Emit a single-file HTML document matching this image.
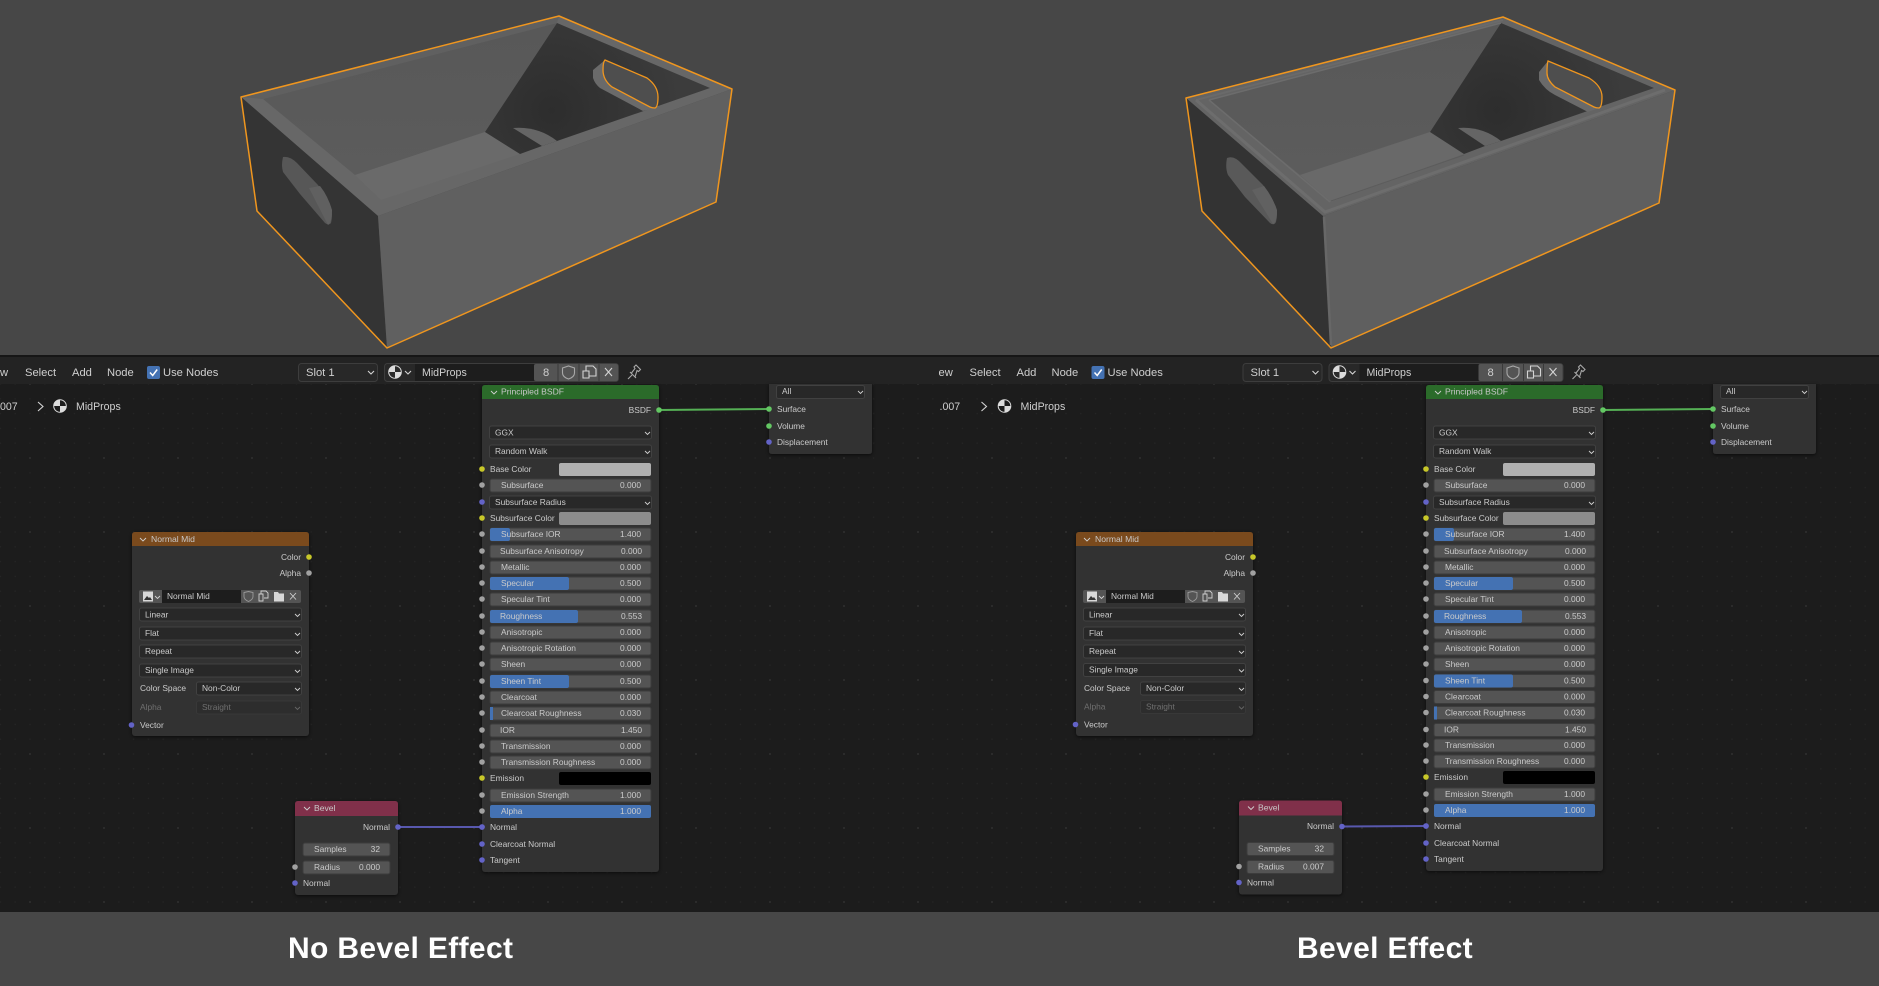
<!DOCTYPE html>
<html><head><meta charset="utf-8"><title>Bevel Effect Comparison</title>
<style>
html,body{margin:0;padding:0;background:#474747;width:1879px;height:986px;overflow:hidden}
svg{display:block;position:absolute;left:0;top:0}
text{font-family:"Liberation Sans",sans-serif}
.t{font-size:8.4px;fill:#cbcbcb}
.d{font-size:8.4px;fill:#6f6f6f}
.r{text-anchor:end}
.h{font-size:11.2px;fill:#cfcfcf}
.mp{font-size:10.6px;fill:#cfcfcf}
.n{font-size:8.6px;fill:#c8c8c8}
.f{fill:#545454;stroke:#3c3c3c;stroke-width:1}
.b{fill:#4472b3}
.m{fill:#282828;stroke:#414141;stroke-width:1}
.c{fill:none;stroke:#d0d0d0;stroke-width:.9}
.y{fill:#c7c729}.g{fill:#a1a1a1}.u{fill:#6363c7}.e{fill:#63c763}
.node{fill:#303030;filter:url(#sh)}
.title{font-size:30px;font-weight:700;fill:#fff;letter-spacing:.35px}
.ic{fill:none;stroke:#d4d4d4;stroke-width:1.1}
.soft{filter:blur(.3px)}
</style></head><body>
<svg width="1879" height="986" viewBox="0 0 1879 986" xmlns="http://www.w3.org/2000/svg">
<defs>
<filter id="sh" x="-10%" y="-10%" width="120%" height="120%"><feDropShadow dx="0" dy="1" stdDeviation="1.5" flood-color="#000" flood-opacity=".6"/></filter>
<pattern id="p1" width="14.8" height="14.8" patternUnits="userSpaceOnUse" x="0.4" y="14"><rect x="-.6" y="-.6" width="1.2" height="1.2" fill="#262626"/><rect x="14.2" y="-.6" width="1.2" height="1.2" fill="#262626"/><rect x="-.6" y="14.2" width="1.2" height="1.2" fill="#262626"/><rect x="14.2" y="14.2" width="1.2" height="1.2" fill="#262626"/></pattern>
<pattern id="p2" width="74" height="74" patternUnits="userSpaceOnUse" x="30" y="14"><rect x="-1" y="-1" width="2" height="2" fill="#2b2b2b"/><rect x="73" y="-1" width="2" height="2" fill="#2b2b2b"/><rect x="-1" y="73" width="2" height="2" fill="#2b2b2b"/><rect x="73" y="73" width="2" height="2" fill="#2b2b2b"/></pattern>
<radialGradient id="bw" gradientUnits="userSpaceOnUse" cx="552" cy="110" r="130"><stop offset="0" stop-color="#2d2d2d"/><stop offset="1" stop-color="#3c3c3c"/></radialGradient>
<radialGradient id="bw2" gradientUnits="userSpaceOnUse" cx="1497" cy="110" r="130"><stop offset="0" stop-color="#2d2d2d"/><stop offset="1" stop-color="#3c3c3c"/></radialGradient>
<linearGradient id="iw" x1="0" y1="0" x2="0" y2="1"><stop offset="0" stop-color="#585858"/><stop offset="1" stop-color="#5c5c5c"/></linearGradient>
</defs>

<!-- backgrounds -->
<rect width="1879" height="986" fill="#474747"/>
<rect x="0" y="355" width="1879" height="557" fill="#1c1c1c"/>
<rect x="0" y="355" width="1879" height="2" fill="#161616"/>
<rect x="0" y="384" width="1879" height="528" fill="url(#p1)"/>
<rect x="0" y="384" width="1879" height="528" fill="url(#p2)"/>
<rect x="0" y="357" width="1879" height="27" fill="#232323"/>

<!-- LEFT BOX -->
<g class="soft">
<polygon points="241,97 559,16 732,89 378,216" fill="#676767"/>
<polygon points="241,97 378,216 387,348 257,211" fill="#343434"/>
<polygon points="378,216 732,89 716,202 387,348" fill="#606060"/>
<polygon points="241,97 559,16 557,23 263,99" fill="#606060"/>
<polygon points="263,99 557,23 485,132 355,175" fill="url(#iw)"/>
<polygon points="355,175 485,132 520,154 381,200" fill="#6a6a6a"/>
<polygon points="557,23 710,88 557,141 542,146 520,154 485,132" fill="url(#bw)"/>
<path d="M513,128 Q538,126 557,141 L542,146 Z" fill="#656565"/>
<path d="M605,60 L593,70 L593,78 Q595,84 600,88 L643,111 L655,108 L612,87 Z" fill="#6a6a6a"/>
<path d="M605,60 L647,78 Q658,86 658,97 Q658,107 655,108 Q652,108 650,107 L612,87 Q603,80 603,70 Q603,62 605,60 Z" fill="#4e4e4e" stroke="#f0961e" stroke-width="1.3"/>
<path d="M283,157 Q281,165 283,172 L300,194 L325,223 Q329,226 331,223 Q333,215 331,207 Q326,195 318,185 L297,163 Q290,156 283,157 Z" fill="#575757"/>
<path d="M309,188 L320,186 Q328,196 332,210 Q332,222 328,225 Z" fill="#606060"/>
<polygon points="241,97 559,16 732,89 716,202 387,348 257,211" fill="none" stroke="#f0961e" stroke-width="1.5" stroke-linejoin="round"/>
</g>

<!-- RIGHT BOX -->
<g class="soft">
<polygon points="1186,98 1503,17 1675,90 1323,216" fill="#646464"/>
<polygon points="1186,98 1323,216 1331,348 1202,211" fill="#333"/>
<polygon points="1323,216 1675,90 1659,203 1331,348" fill="#5f5f5f"/>
<polygon points="1209,100 1501,23 1430,132 1300,175" fill="url(#iw)"/>
<polygon points="1300,175 1430,132 1464,154 1331,202" fill="#696969"/>
<polygon points="1501,23 1654,88 1501,141 1485,146 1464,154 1430,132" fill="url(#bw2)"/>
<path d="M1458,128 Q1482,126 1501,141 L1485,146 Z" fill="#656565"/>
<polyline points="1209,100 1501,23" fill="none" stroke="#6c6c6c" stroke-width="1.5"/>
<polyline points="1209,100 1330,202" fill="none" stroke="#6c6c6c" stroke-width="1.5"/>
<polyline points="1331,201 1464,155" fill="none" stroke="#5c5c5c" stroke-width="1"/>
<polyline points="1196,100 1503,20" fill="none" stroke="#6a6a6a" stroke-width="2"/>
<polyline points="1196,100 1325,212 1665,90" fill="none" stroke="#6d6d6d" stroke-width="3"/>
<polyline points="1324,217 1331,345" fill="none" stroke="#676767" stroke-width="2.5"/>
<path d="M1548,61 L1539,72 L1539,80 Q1545,90 1555,95 L1588,112 L1599,108 L1555,87 Z" fill="#6a6a6a"/>
<path d="M1548,61 L1589,78 Q1602,86 1602,97 Q1602,107 1599,108 Q1596,108 1594,107 L1555,87 Q1547,80 1547,73 Q1547,64 1548,61 Z" fill="#4e4e4e" stroke="#f0961e" stroke-width="1.3"/>
<path d="M1227,158 Q1225,168 1228,175 L1245,197 L1270,223 Q1274,226 1276,222 Q1278,214 1276,207 Q1271,195 1263,185 L1242,164 Q1234,155 1227,158 Z" fill="#595959"/>
<path d="M1252,190 L1264,186 Q1272,196 1277,210 Q1277,222 1273,224 Z" fill="#616161"/>
<polygon points="1186,98 1503,17 1675,90 1659,203 1331,348 1202,211" fill="none" stroke="#f0961e" stroke-width="1.5" stroke-linejoin="round"/>
</g>

<!-- LEFT HEADER -->
<g>
<text class="h" x="0" y="376">w</text>
<text class="h" x="25" y="376">Select</text>
<text class="h" x="72" y="376">Add</text>
<text class="h" x="107" y="376">Node</text>
<rect x="147" y="366" width="13" height="13" rx="2" fill="#4472b3"/>
<path d="M150,372.5 l2.7,3 l4.5,-6" fill="none" stroke="#fff" stroke-width="1.5"/>
<text class="h" x="163" y="376">Use Nodes</text>
<rect x="298.500" y="363.500" width="79" height="18" rx="3" fill="#282828" stroke="#3d3d3d"/>
<text class="h" x="306" y="376">Slot 1</text>
<path d="M368,371 l3,3 l3,-3" class="ic"/>
<rect x="384.500" y="363.500" width="234" height="18" rx="3" fill="#282828" stroke="#3d3d3d"/>
<circle cx="395" cy="372" r="6.300" fill="#2a2a2a" stroke="#dcdcdc" stroke-width="1"/><path d="M395,372 V365.700 A6.300,6.300 0 0 0 388.700,372 Z M395,372 H401.300 A6.300,6.300 0 0 1 395,378.300 Z" fill="#dcdcdc"/>
<path d="M405,371 l3,3 l3,-3" class="ic"/>
<rect x="415" y="364" width="119" height="17" fill="#1d1d1d"/>
<text class="mp" x="422" y="376">MidProps</text>
<rect x="534" y="364" width="84" height="17" rx="2" fill="#545454"/>
<path d="M558,364v17M579,364v17M599,364v17" stroke="#3a3a3a"/>
<text class="h" x="543" y="376">8</text>
<path d="M562.500,368 l6,-2 l6,2 v5 q0,4 -6,6 q-6,-2 -6,-6 z" class="ic" style="stroke:#a8a8a8"/>
<path d="M583,371 h6 v7 h-6 z M586,371 v-5 h7 l3,3 v7 h-7" class="ic"/>
<path d="M605,368 l7,8 M612,368 l-7,8" class="ic"/>
<path d="M628,379 L632,375 M630,372 L636,378 M631.500,373 L635,368.500 L634,367 L636,365 L640.500,369.500 L638.500,371.500 L637,370.500 L635,377" class="ic" style="stroke:#a8a8a8"/>
<text class="mp" x="0" y="410">007</text>
<path d="M38,402 l5,4.500 l-5,4.500" class="ic"/>
<circle cx="60" cy="406" r="6.300" fill="#1c1c1c" stroke="#dcdcdc" stroke-width="1"/><path d="M60,406 V399.700 A6.300,6.300 0 0 0 53.700,406 Z M60,406 H66.300 A6.300,6.300 0 0 1 60,412.300 Z" fill="#dcdcdc"/>
<text class="mp" x="76" y="410">MidProps</text>
</g>

<!-- RIGHT HEADER -->
<g transform="translate(944.500,0)">
<text class="h" x="-6" y="376">ew</text>
<text class="h" x="25" y="376">Select</text>
<text class="h" x="72" y="376">Add</text>
<text class="h" x="107" y="376">Node</text>
<rect x="147" y="366" width="13" height="13" rx="2" fill="#4472b3"/>
<path d="M150,372.500 l2.700,3 l4.500,-6" fill="none" stroke="#fff" stroke-width="1.5"/>
<text class="h" x="163" y="376">Use Nodes</text>
<rect x="298.500" y="363.500" width="79" height="18" rx="3" fill="#282828" stroke="#3d3d3d"/>
<text class="h" x="306" y="376">Slot 1</text>
<path d="M368,371 l3,3 l3,-3" class="ic"/>
<rect x="384.500" y="363.500" width="234" height="18" rx="3" fill="#282828" stroke="#3d3d3d"/>
<circle cx="395" cy="372" r="6.300" fill="#2a2a2a" stroke="#dcdcdc" stroke-width="1"/><path d="M395,372 V365.700 A6.300,6.300 0 0 0 388.700,372 Z M395,372 H401.300 A6.300,6.300 0 0 1 395,378.300 Z" fill="#dcdcdc"/>
<path d="M405,371 l3,3 l3,-3" class="ic"/>
<rect x="415" y="364" width="119" height="17" fill="#1d1d1d"/>
<text class="mp" x="422" y="376">MidProps</text>
<rect x="534" y="364" width="84" height="17" rx="2" fill="#545454"/>
<path d="M558,364v17M579,364v17M599,364v17" stroke="#3a3a3a"/>
<text class="h" x="543" y="376">8</text>
<path d="M562.500,368 l6,-2 l6,2 v5 q0,4 -6,6 q-6,-2 -6,-6 z" class="ic" style="stroke:#a8a8a8"/>
<path d="M583,371 h6 v7 h-6 z M586,371 v-5 h7 l3,3 v7 h-7" class="ic"/>
<path d="M605,368 l7,8 M612,368 l-7,8" class="ic"/>
<path d="M628,379 L632,375 M630,372 L636,378 M631.500,373 L635,368.500 L634,367 L636,365 L640.500,369.500 L638.500,371.500 L637,370.500 L635,377" class="ic" style="stroke:#a8a8a8"/>
<text class="mp" x="-5" y="410">.007</text>
<path d="M37,402 l5,4.500 l-5,4.500" class="ic"/>
<circle cx="60" cy="406" r="6.300" fill="#1c1c1c" stroke="#dcdcdc" stroke-width="1"/><path d="M60,406 V399.700 A6.300,6.300 0 0 0 53.700,406 Z M60,406 H66.300 A6.300,6.300 0 0 1 60,412.300 Z" fill="#dcdcdc"/>
<text class="mp" x="76" y="410">MidProps</text>
</g>

<!-- LEFT NODES -->
<g class="soft">
<path d="M769,384 H872 V451 q0,3 -3,3 H772 q-3,0 -3,-3 Z" class="node"/>
<rect x="776.500" y="385.500" width="88" height="13" rx="2" class="m"/><text class="t" x="782" y="394">All</text><path d="M858,391 l2.500,2.500 l2.500,-2.500" class="c"/>
<text class="t" x="777" y="412">Surface</text><text class="t" x="777" y="429">Volume</text><text class="t" x="777" y="445">Displacement</text>
<path d="M659,410 L769,409" stroke="#55b055" stroke-width="2" fill="none"/>
<circle class="e" cx="769" cy="409" r="2.800"/><circle class="e" cx="769" cy="426" r="2.800"/><circle class="u" cx="769" cy="442" r="2.800"/>

<rect x="482" y="385" width="177" height="487" rx="3" class="node"/>
<path d="M482,399 V388 q0,-3 3,-3 H656 q3,0 3,3 V399 Z" fill="#2b6b2a"/>
<path d="M491,391 l3,3 l3,-3" class="c"/>
<text class="n" x="501" y="394.500">Principled BSDF</text>
<text class="t r" x="651" y="413">BSDF</text><circle class="e" cx="659" cy="410" r="2.800"/>
<rect x="489.500" y="426" width="162" height="13" rx="2" class="m"/><text class="t" x="495" y="435.500">GGX</text><path d="M645,432 l2.500,2.500 l2.500,-2.500" class="c"/>
<rect x="489.500" y="445" width="162" height="13" rx="2" class="m"/><text class="t" x="495" y="454">Random Walk</text><path d="M645,451 l2.500,2.500 l2.500,-2.500" class="c"/>
<text class="t" x="490" y="472">Base Color</text><rect x="559" y="463" width="92" height="13" rx="2" fill="#b0b0b0"/><circle class="y" cx="482" cy="469" r="2.800"/>
<rect class="f" x="490" y="479" width="161" height="13" rx="2"/><text class="t" x="501" y="488">Subsurface</text><text class="t r" x="641" y="488">0.000</text><circle class="g" cx="482" cy="485" r="2.800"/>
<rect x="489.500" y="496" width="162" height="13" rx="2" class="m"/><text class="t" x="495" y="505">Subsurface Radius</text><path d="M645,502 l2.500,2.500 l2.500,-2.500" class="c"/><circle class="u" cx="482" cy="502" r="2.800"/>
<text class="t" x="490" y="521">Subsurface Color</text><rect x="559" y="512" width="92" height="13" rx="2" fill="#8c8c8c"/><circle class="y" cx="482" cy="518" r="2.800"/>
<rect class="f" x="490" y="528" width="161" height="13" rx="2"/><rect class="b" x="490" y="528" width="20" height="13" rx="2"/><text class="t" x="501" y="537">Subsurface IOR</text><text class="t r" x="641" y="537">1.400</text><circle class="g" cx="482" cy="534" r="2.800"/>
<rect class="f" x="490" y="545" width="161" height="13" rx="2"/><text class="t" x="500" y="554">Subsurface Anisotropy</text><text class="t r" x="642" y="554">0.000</text><circle class="g" cx="482" cy="551" r="2.800"/>
<rect class="f" x="490" y="561" width="161" height="13" rx="2"/><text class="t" x="501" y="570">Metallic</text><text class="t r" x="641" y="570">0.000</text><circle class="g" cx="482" cy="567" r="2.800"/>
<rect class="f" x="490" y="577" width="161" height="13" rx="2"/><rect class="b" x="490" y="577" width="79" height="13" rx="2"/><text class="t" x="501" y="586">Specular</text><text class="t r" x="641" y="586">0.500</text><circle class="g" cx="482" cy="583" r="2.800"/>
<rect class="f" x="490" y="593" width="161" height="13" rx="2"/><text class="t" x="501" y="602">Specular Tint</text><text class="t r" x="641" y="602">0.000</text><circle class="g" cx="482" cy="599" r="2.800"/>
<rect class="f" x="490" y="610" width="161" height="13" rx="2"/><rect class="b" x="490" y="610" width="88" height="13" rx="2"/><text class="t" x="500" y="619">Roughness</text><text class="t r" x="642" y="619">0.553</text><circle class="g" cx="482" cy="616" r="2.800"/>
<rect class="f" x="490" y="626" width="161" height="13" rx="2"/><text class="t" x="501" y="635">Anisotropic</text><text class="t r" x="641" y="635">0.000</text><circle class="g" cx="482" cy="632" r="2.800"/>
<rect class="f" x="490" y="642" width="161" height="13" rx="2"/><text class="t" x="501" y="651">Anisotropic Rotation</text><text class="t r" x="641" y="651">0.000</text><circle class="g" cx="482" cy="648" r="2.800"/>
<rect class="f" x="490" y="658" width="161" height="13" rx="2"/><text class="t" x="501" y="667">Sheen</text><text class="t r" x="641" y="667">0.000</text><circle class="g" cx="482" cy="664" r="2.800"/>
<rect class="f" x="490" y="675" width="161" height="13" rx="2"/><rect class="b" x="490" y="675" width="79" height="13" rx="2"/><text class="t" x="501" y="684">Sheen Tint</text><text class="t r" x="641" y="684">0.500</text><circle class="g" cx="482" cy="681" r="2.800"/>
<rect class="f" x="490" y="691" width="161" height="13" rx="2"/><text class="t" x="501" y="700">Clearcoat</text><text class="t r" x="641" y="700">0.000</text><circle class="g" cx="482" cy="697" r="2.800"/>
<rect class="f" x="490" y="707" width="161" height="13" rx="2"/><rect class="b" x="490" y="707" width="3" height="13"/><text class="t" x="501" y="716">Clearcoat Roughness</text><text class="t r" x="641" y="716">0.030</text><circle class="g" cx="482" cy="713" r="2.800"/>
<rect class="f" x="490" y="724" width="161" height="13" rx="2"/><text class="t" x="500" y="733">IOR</text><text class="t r" x="642" y="733">1.450</text><circle class="g" cx="482" cy="730" r="2.800"/>
<rect class="f" x="490" y="740" width="161" height="13" rx="2"/><text class="t" x="501" y="749">Transmission</text><text class="t r" x="641" y="749">0.000</text><circle class="g" cx="482" cy="746" r="2.800"/>
<rect class="f" x="490" y="756" width="161" height="13" rx="2"/><text class="t" x="501" y="765">Transmission Roughness</text><text class="t r" x="641" y="765">0.000</text><circle class="g" cx="482" cy="762" r="2.800"/>
<text class="t" x="490" y="781">Emission</text><rect x="559" y="772" width="92" height="13" rx="2" fill="#000"/><circle class="y" cx="482" cy="778" r="2.800"/>
<rect class="f" x="490" y="789" width="161" height="13" rx="2"/><text class="t" x="501" y="798">Emission Strength</text><text class="t r" x="641" y="798">1.000</text><circle class="g" cx="482" cy="795" r="2.800"/>
<rect class="b" x="490" y="805" width="161" height="13" rx="2"/><text class="t" x="501" y="814">Alpha</text><text class="t r" x="641" y="814">1.000</text><circle class="g" cx="482" cy="811" r="2.800"/>
<text class="t" x="490" y="830">Normal</text><circle class="u" cx="482" cy="827" r="2.800"/>
<text class="t" x="490" y="847">Clearcoat Normal</text><circle class="u" cx="482" cy="844" r="2.800"/>
<text class="t" x="490" y="863">Tangent</text><circle class="u" cx="482" cy="860" r="2.800"/>

<rect x="132" y="532" width="177" height="204" rx="3" class="node"/>
<path d="M132,546 V535 q0,-3 3,-3 H306 q3,0 3,3 V546 Z" fill="#7a4a1d"/>
<path d="M140,538 l3,3 l3,-3" class="c"/>
<text class="n" x="151" y="542">Normal Mid</text>
<text class="t r" x="301" y="560">Color</text><circle class="y" cx="309" cy="557" r="2.800"/>
<text class="t r" x="301" y="576">Alpha</text><circle class="g" cx="309" cy="573" r="2.800"/>
<rect x="139" y="590" width="162" height="13" rx="2" fill="#545454"/>
<rect x="162" y="590" width="79" height="13" fill="#1d1d1d"/>
<rect x="143" y="591.500" width="10" height="10" fill="#d8d8d8"/><path d="M144,600 l3,-4 l2,2 l1,-1 l2,3 z" fill="#333"/>
<path d="M155,596 l2.500,2.500 l2.500,-2.500" class="c"/>
<text class="t" x="167" y="599">Normal Mid</text>
<path d="M244,592.500 l4.500,-1 l4.500,1 v4 q0,3 -4.500,5 q-4.500,-2 -4.500,-5 z" fill="none" stroke="#9a9a9a" stroke-width=".9"/>
<path d="M259,594 h4 v7 h-4 z M261,594 v-3 h5 l2,2 v5 h-4" class="c"/>
<path d="M274,592 h4 l1,1.500 h5 v8 h-10 z" fill="#d8d8d8"/>
<path d="M290,593 l6,6.500 M296,593 l-6,6.500" class="c"/>
<rect x="139.500" y="608" width="162" height="13" rx="2" class="m"/><text class="t" x="145" y="617.500">Linear</text><path d="M295,614 l2.500,2.500 l2.500,-2.500" class="c"/>
<rect x="139.500" y="627" width="162" height="13" rx="2" class="m"/><text class="t" x="145" y="636">Flat</text><path d="M295,633 l2.500,2.500 l2.500,-2.500" class="c"/>
<rect x="139.500" y="645" width="162" height="13" rx="2" class="m"/><text class="t" x="145" y="654">Repeat</text><path d="M295,651 l2.500,2.500 l2.500,-2.500" class="c"/>
<rect x="139.500" y="664" width="162" height="13" rx="2" class="m"/><text class="t" x="145" y="673">Single Image</text><path d="M295,670 l2.500,2.500 l2.500,-2.500" class="c"/>
<text class="t" x="140" y="691">Color Space</text>
<rect x="196.500" y="682" width="105" height="13" rx="2" class="m"/><text class="t" x="202" y="691">Non-Color</text><path d="M295,688 l2.500,2.500 l2.500,-2.500" class="c"/>
<text class="d" x="140" y="710">Alpha</text>
<rect x="196.500" y="701" width="105" height="13" rx="2" fill="#2d2d2d" stroke="#383838"/><text class="d" x="202" y="710">Straight</text><path d="M295,707 l2.500,2.500 l2.500,-2.500" fill="none" stroke="#666" stroke-width=".9"/>
<text class="t" x="140" y="728">Vector</text><circle class="u" cx="131.500" cy="725" r="2.800"/>

<rect x="295" y="801" width="103" height="94" rx="3" class="node"/>
<path d="M295,816 V804 q0,-3 3,-3 H395 q3,0 3,3 V816 Z" fill="#80304a"/>
<path d="M304,807 l3,3 l3,-3" class="c"/>
<text class="n" x="314" y="811">Bevel</text>
<text class="t r" x="390" y="830">Normal</text>
<path d="M398,827 L482,827" stroke="#5858ae" stroke-width="2" fill="none"/>
<circle class="u" cx="398" cy="827" r="2.800"/>
<circle class="u" cx="482" cy="827" r="2.800"/>
<rect class="f" x="303" y="843" width="87" height="13" rx="2"/><text class="t" x="314" y="852">Samples</text><text class="t r" x="380" y="852">32</text>
<rect class="f" x="303" y="861" width="87" height="13" rx="2"/><text class="t" x="314" y="870">Radius</text><text class="t r" x="380" y="870">0.000</text>
<circle class="g" cx="295" cy="867" r="2.800"/>
<text class="t" x="303" y="886">Normal</text><circle class="u" cx="295" cy="883" r="2.800"/>
</g>

<!-- RIGHT NODES -->
<g class="soft" transform="translate(944,0)">
<path d="M769,384 H872 V451 q0,3 -3,3 H772 q-3,0 -3,-3 Z" class="node"/>
<rect x="776.500" y="385.500" width="88" height="13" rx="2" class="m"/><text class="t" x="782" y="394">All</text><path d="M858,391 l2.500,2.500 l2.500,-2.500" class="c"/>
<text class="t" x="777" y="412">Surface</text><text class="t" x="777" y="429">Volume</text><text class="t" x="777" y="445">Displacement</text>
<path d="M659,410 L769,409" stroke="#55b055" stroke-width="2" fill="none"/>
<circle class="e" cx="769" cy="409" r="2.800"/><circle class="e" cx="769" cy="426" r="2.800"/><circle class="u" cx="769" cy="442" r="2.800"/>

<rect x="482" y="385" width="177" height="486" rx="3" class="node"/>
<path d="M482,399 V388 q0,-3 3,-3 H656 q3,0 3,3 V399 Z" fill="#2b6b2a"/>
<path d="M491,391 l3,3 l3,-3" class="c"/>
<text class="n" x="501" y="394.500">Principled BSDF</text>
<text class="t r" x="651" y="413">BSDF</text><circle class="e" cx="659" cy="410" r="2.800"/>
<rect x="489.500" y="426" width="162" height="13" rx="2" class="m"/><text class="t" x="495" y="435.500">GGX</text><path d="M645,432 l2.500,2.500 l2.500,-2.500" class="c"/>
<rect x="489.500" y="445" width="162" height="13" rx="2" class="m"/><text class="t" x="495" y="454">Random Walk</text><path d="M645,451 l2.500,2.500 l2.500,-2.500" class="c"/>
<text class="t" x="490" y="472">Base Color</text><rect x="559" y="463" width="92" height="13" rx="2" fill="#b0b0b0"/><circle class="y" cx="482" cy="469" r="2.800"/>
<rect class="f" x="490" y="479" width="161" height="13" rx="2"/><text class="t" x="501" y="488">Subsurface</text><text class="t r" x="641" y="488">0.000</text><circle class="g" cx="482" cy="485" r="2.800"/>
<rect x="489.500" y="496" width="162" height="13" rx="2" class="m"/><text class="t" x="495" y="505">Subsurface Radius</text><path d="M645,502 l2.500,2.500 l2.500,-2.500" class="c"/><circle class="u" cx="482" cy="502" r="2.800"/>
<text class="t" x="490" y="521">Subsurface Color</text><rect x="559" y="512" width="92" height="13" rx="2" fill="#8c8c8c"/><circle class="y" cx="482" cy="518" r="2.800"/>
<rect class="f" x="490" y="528" width="161" height="13" rx="2"/><rect class="b" x="490" y="528" width="20" height="13" rx="2"/><text class="t" x="501" y="537">Subsurface IOR</text><text class="t r" x="641" y="537">1.400</text><circle class="g" cx="482" cy="534" r="2.800"/>
<rect class="f" x="490" y="545" width="161" height="13" rx="2"/><text class="t" x="500" y="554">Subsurface Anisotropy</text><text class="t r" x="642" y="554">0.000</text><circle class="g" cx="482" cy="551" r="2.800"/>
<rect class="f" x="490" y="561" width="161" height="13" rx="2"/><text class="t" x="501" y="570">Metallic</text><text class="t r" x="641" y="570">0.000</text><circle class="g" cx="482" cy="567" r="2.800"/>
<rect class="f" x="490" y="577" width="161" height="13" rx="2"/><rect class="b" x="490" y="577" width="79" height="13" rx="2"/><text class="t" x="501" y="586">Specular</text><text class="t r" x="641" y="586">0.500</text><circle class="g" cx="482" cy="583" r="2.800"/>
<rect class="f" x="490" y="593" width="161" height="13" rx="2"/><text class="t" x="501" y="602">Specular Tint</text><text class="t r" x="641" y="602">0.000</text><circle class="g" cx="482" cy="599" r="2.800"/>
<rect class="f" x="490" y="610" width="161" height="13" rx="2"/><rect class="b" x="490" y="610" width="88" height="13" rx="2"/><text class="t" x="500" y="619">Roughness</text><text class="t r" x="642" y="619">0.553</text><circle class="g" cx="482" cy="616" r="2.800"/>
<rect class="f" x="490" y="626" width="161" height="13" rx="2"/><text class="t" x="501" y="635">Anisotropic</text><text class="t r" x="641" y="635">0.000</text><circle class="g" cx="482" cy="632" r="2.800"/>
<rect class="f" x="490" y="642" width="161" height="13" rx="2"/><text class="t" x="501" y="651">Anisotropic Rotation</text><text class="t r" x="641" y="651">0.000</text><circle class="g" cx="482" cy="648" r="2.800"/>
<rect class="f" x="490" y="658" width="161" height="13" rx="2"/><text class="t" x="501" y="667">Sheen</text><text class="t r" x="641" y="667">0.000</text><circle class="g" cx="482" cy="664" r="2.800"/>
<rect class="f" x="490" y="674.500" width="161" height="13" rx="2"/><rect class="b" x="490" y="674.500" width="79" height="13" rx="2"/><text class="t" x="501" y="683.500">Sheen Tint</text><text class="t r" x="641" y="683.500">0.500</text><circle class="g" cx="482" cy="680.500" r="2.800"/>
<rect class="f" x="490" y="690.500" width="161" height="13" rx="2"/><text class="t" x="501" y="699.500">Clearcoat</text><text class="t r" x="641" y="699.500">0.000</text><circle class="g" cx="482" cy="696.500" r="2.800"/>
<rect class="f" x="490" y="706.500" width="161" height="13" rx="2"/><rect class="b" x="490" y="706.500" width="3" height="13"/><text class="t" x="501" y="715.500">Clearcoat Roughness</text><text class="t r" x="641" y="715.500">0.030</text><circle class="g" cx="482" cy="712.500" r="2.800"/>
<rect class="f" x="490" y="723.500" width="161" height="13" rx="2"/><text class="t" x="500" y="732.500">IOR</text><text class="t r" x="642" y="732.500">1.450</text><circle class="g" cx="482" cy="729.500" r="2.800"/>
<rect class="f" x="490" y="739" width="161" height="13" rx="2"/><text class="t" x="501" y="748">Transmission</text><text class="t r" x="641" y="748">0.000</text><circle class="g" cx="482" cy="745" r="2.800"/>
<rect class="f" x="490" y="755" width="161" height="13" rx="2"/><text class="t" x="501" y="764">Transmission Roughness</text><text class="t r" x="641" y="764">0.000</text><circle class="g" cx="482" cy="761" r="2.800"/>
<text class="t" x="490" y="780">Emission</text><rect x="559" y="771" width="92" height="13" rx="2" fill="#000"/><circle class="y" cx="482" cy="777" r="2.800"/>
<rect class="f" x="490" y="788" width="161" height="13" rx="2"/><text class="t" x="501" y="797">Emission Strength</text><text class="t r" x="641" y="797">1.000</text><circle class="g" cx="482" cy="794" r="2.800"/>
<rect class="b" x="490" y="804" width="161" height="13" rx="2"/><text class="t" x="501" y="813">Alpha</text><text class="t r" x="641" y="813">1.000</text><circle class="g" cx="482" cy="810" r="2.800"/>
<text class="t" x="490" y="829">Normal</text><circle class="u" cx="482" cy="826" r="2.800"/>
<text class="t" x="490" y="846">Clearcoat Normal</text><circle class="u" cx="482" cy="843" r="2.800"/>
<text class="t" x="490" y="862">Tangent</text><circle class="u" cx="482" cy="859" r="2.800"/>

<rect x="132" y="532" width="177" height="204" rx="3" class="node"/>
<path d="M132,546 V535 q0,-3 3,-3 H306 q3,0 3,3 V546 Z" fill="#7a4a1d"/>
<path d="M140,538 l3,3 l3,-3" class="c"/>
<text class="n" x="151" y="542">Normal Mid</text>
<text class="t r" x="301" y="560">Color</text><circle class="y" cx="309" cy="557" r="2.800"/>
<text class="t r" x="301" y="576">Alpha</text><circle class="g" cx="309" cy="573" r="2.800"/>
<rect x="139" y="590" width="162" height="13" rx="2" fill="#545454"/>
<rect x="162" y="590" width="79" height="13" fill="#1d1d1d"/>
<rect x="143" y="591.500" width="10" height="10" fill="#d8d8d8"/><path d="M144,600 l3,-4 l2,2 l1,-1 l2,3 z" fill="#333"/>
<path d="M155,596 l2.500,2.500 l2.500,-2.500" class="c"/>
<text class="t" x="167" y="599">Normal Mid</text>
<path d="M244,592.500 l4.500,-1 l4.500,1 v4 q0,3 -4.500,5 q-4.500,-2 -4.500,-5 z" fill="none" stroke="#9a9a9a" stroke-width=".9"/>
<path d="M259,594 h4 v7 h-4 z M261,594 v-3 h5 l2,2 v5 h-4" class="c"/>
<path d="M274,592 h4 l1,1.500 h5 v8 h-10 z" fill="#d8d8d8"/>
<path d="M290,593 l6,6.500 M296,593 l-6,6.500" class="c"/>
<rect x="139.500" y="608" width="162" height="13" rx="2" class="m"/><text class="t" x="145" y="617.500">Linear</text><path d="M295,614 l2.500,2.500 l2.500,-2.500" class="c"/>
<rect x="139.500" y="627" width="162" height="13" rx="2" class="m"/><text class="t" x="145" y="636">Flat</text><path d="M295,633 l2.500,2.500 l2.500,-2.500" class="c"/>
<rect x="139.500" y="645" width="162" height="13" rx="2" class="m"/><text class="t" x="145" y="654">Repeat</text><path d="M295,651 l2.500,2.500 l2.500,-2.500" class="c"/>
<rect x="139.500" y="663.500" width="162" height="13" rx="2" class="m"/><text class="t" x="145" y="672.500">Single Image</text><path d="M295,669.500 l2.500,2.500 l2.500,-2.500" class="c"/>
<text class="t" x="140" y="691">Color Space</text>
<rect x="196.500" y="682" width="105" height="13" rx="2" class="m"/><text class="t" x="202" y="691">Non-Color</text><path d="M295,688 l2.500,2.500 l2.500,-2.500" class="c"/>
<text class="d" x="140" y="709.500">Alpha</text>
<rect x="196.500" y="700.500" width="105" height="13" rx="2" fill="#2d2d2d" stroke="#383838"/><text class="d" x="202" y="709.500">Straight</text><path d="M295,706.500 l2.500,2.500 l2.500,-2.500" fill="none" stroke="#666" stroke-width=".9"/>
<text class="t" x="140" y="727.500">Vector</text><circle class="u" cx="131.500" cy="724.500" r="2.800"/>

<rect x="295" y="800.500" width="103" height="94" rx="3" class="node"/>
<path d="M295,815.500 V803.500 q0,-3 3,-3 H395 q3,0 3,3 V815.500 Z" fill="#80304a"/>
<path d="M304,806.500 l3,3 l3,-3" class="c"/>
<text class="n" x="314" y="810.500">Bevel</text>
<text class="t r" x="390" y="829">Normal</text>
<path d="M398,826.500 L482,826" stroke="#5858ae" stroke-width="2" fill="none"/>
<circle class="u" cx="398" cy="826.500" r="2.800"/>
<circle class="u" cx="482" cy="826" r="2.800"/>
<rect class="f" x="303" y="842.500" width="87" height="13" rx="2"/><text class="t" x="314" y="851.500">Samples</text><text class="t r" x="380" y="851.500">32</text>
<rect class="f" x="303" y="860.500" width="87" height="13" rx="2"/><text class="t" x="314" y="869.500">Radius</text><text class="t r" x="380" y="869.500">0.007</text>
<circle class="g" cx="295" cy="866.500" r="2.800"/>
<text class="t" x="303" y="885.500">Normal</text><circle class="u" cx="295" cy="882.500" r="2.800"/>
</g>

<!-- Bottom strip -->
<rect x="0" y="912" width="1879" height="74" fill="#474747"/>
<text class="title" x="288" y="958">No Bevel Effect</text>
<text class="title" x="1297" y="958">Bevel Effect</text>
</svg>
</body></html>
